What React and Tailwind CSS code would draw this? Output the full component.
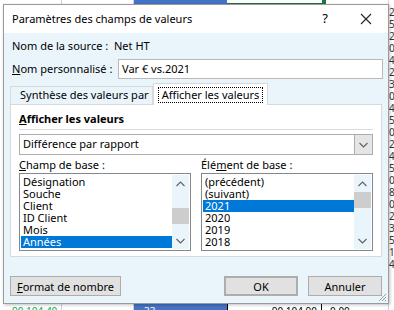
import React from 'react';

const font = "font-['Noto_Sans',sans-serif]";

const Chevron = ({ dir = 'down' }) => (
  <svg width="9" height="6" viewBox="0 0 9 6">
    {dir === 'down' ? (
      <path d="M0.5 1 L4.5 5 L8.5 1" fill="none" stroke="#606060" strokeWidth="1.1" />
    ) : (
      <path d="M0.5 5 L4.5 1 L8.5 5" fill="none" stroke="#606060" strokeWidth="1.1" />
    )}
  </svg>
);

const ListBox = ({ items, selected, thumbTop }) => (
  <div className="flex h-[78px] border border-[#828790] bg-white p-[1px]">
    <div className="flex-1 flex flex-col pt-[1px]">
      {items.map((item) => (
        <div
          key={item}
          className={`h-[12px] leading-[12px] pl-[2px] whitespace-nowrap ${
            item === selected ? 'bg-[#0078d7] text-white' : 'text-black'
          }`}
        >
          {item}
        </div>
      ))}
    </div>
    <div className="w-[17px] flex flex-col bg-[#eaf5fb]">
      <div className="h-[17px] flex items-center justify-center">
        <Chevron dir="up" />
      </div>
      <div className="flex-1 flex flex-col">
        <div style={{ height: thumbTop }} />
        <div className="h-[16px] bg-[#cdcdcd]" />
      </div>
      <div className="h-[17px] flex items-center justify-center">
        <Chevron dir="down" />
      </div>
    </div>
  </div>
);

const Button = ({ children, className = '' }) => (
  <button
    className={`h-[20px] bg-[#e1e1e1] border border-[#adadad] leading-none flex items-center justify-center whitespace-nowrap ${className}`}
  >
    {children}
  </button>
);

const App = () => {
  return (
    <div className={`relative w-[394px] h-[310px] overflow-hidden bg-white ${font} text-[11px] text-black`}>
      {/* spreadsheet behind */}
      <div className="absolute left-0 top-0 w-[394px] h-[5px] flex">
        <div className="w-[62px] border-r border-[#d4d4d4]" />
        <div className="w-[72px] border-r border-[#d4d4d4]" />
        <div className="w-[93px] bg-[#4472c4]" />
        <div className="w-[95px] border-b-2 border-[#217346]" />
        <div className="w-[4px] h-[4px] bg-[#217346]" />
      </div>
      <div className="absolute left-[389px] top-[6px] w-[5px] overflow-hidden flex flex-col text-[10px] leading-[12px] text-[#333]">
        {['2', '5', '2', '0', '4', '2', '3', '0', '4', '5', '0', '2', '4', '5', '0', '8', '0', '2', '3', '5', '1', '4'].map((n, i) => (
          <div key={i}>{n}</div>
        ))}
      </div>
      <div className="absolute left-[388px] top-0 w-[1px] h-[310px] bg-[#d4d4d4]" />
      <div className="absolute left-0 top-[303px] w-[394px] h-[7px] flex text-[10px] leading-[16px]">
        <div className="w-[62px] border-r border-[#d4d4d4] pl-[12px] text-[#00b050]">90 104,40</div>
        <div className="w-[72px] border-r border-[#d4d4d4]" />
        <div className="w-[94px] bg-[#4472c4] border-r border-black text-white pl-[10px]">33</div>
        <div className="w-[94px] border-r border-black text-right pr-[4px]">90 104,90</div>
        <div className="flex-1 pl-[8px]">0,00</div>
      </div>

      {/* dialog */}
      <div className="absolute left-[3px] top-[4px] w-[386px] h-[300px] border border-[#9a9a9a] bg-[#eaf5fb] flex flex-col shadow-[1px_1px_3px_rgba(0,0,0,0.25)]">
        <div className="h-[28px] shrink-0 bg-white flex items-center pl-[8px] pr-[16px]">
          <span className="flex-1 whitespace-nowrap">Paramètres des champs de valeurs</span>
          <span className="w-[20px] text-center mr-[25px] text-[13px]">?</span>
          <svg width="12" height="12" viewBox="0 0 12 12">
            <path d="M1 1 L11 11 M11 1 L1 11" stroke="#222" strokeWidth="1.1" />
          </svg>
        </div>

        <div className="flex-1 flex flex-col px-[6px]">
          <div className="mt-[6px] h-[14px] flex items-center pl-[2px] whitespace-nowrap">
            <span className="w-[102px]">Nom de la source :</span>
            <span>Net HT</span>
          </div>

          <div className="mt-[6px] flex items-center pl-[2px] whitespace-nowrap">
            <span className="w-[106px]">
              <span className="underline">N</span>om personnalisé :
            </span>
            <div className="flex-1 h-[20px] bg-white border border-[#b9b9b9] flex items-center pl-[3px] mr-[-1px]">
              Var € vs.2021
            </div>
          </div>

          <div className="mt-[3px] flex items-end h-[22px] whitespace-nowrap">
            <div className="w-[143px] h-[18px] border border-b-0 border-[#d9d9d9] bg-[#eaf5fb] flex items-center pl-[9px]">
              Synthèse des valeurs par
            </div>
            <div className="w-[115px] h-[22px] border border-b-0 border-[#d9d9d9] bg-white flex items-center justify-center relative z-10 -mb-[1px]">
              <span className="border border-dotted border-black px-[3px] leading-[14px]">Afficher les valeurs</span>
            </div>
          </div>

          <div className="h-[153px] bg-white border border-[#d9d9d9] px-[8px] flex flex-col">
            <div className="mt-[7px] font-bold leading-[14px]">
              <span className="underline">A</span>fficher les valeurs
            </div>
            <div className="mt-[3px] h-[1px] bg-[#dcdcdc]" />
            <div className="mt-[4px] h-[21px] border border-[#adadad] bg-white flex items-center">
              <span className="flex-1 pl-[3px]">Différence par rapport</span>
              <div className="w-[18px] h-full bg-[#e5e5e5] border-l border-[#adadad] flex items-center justify-center">
                <Chevron dir="down" />
              </div>
            </div>
            <div className="mt-[3px] flex gap-[10px]">
              <div className="w-[172px] flex flex-col">
                <div className="h-[14px] leading-[14px] mb-[1px]">
                  <span className="underline">C</span>hamp de base :
                </div>
                <ListBox
                  items={['Désignation', 'Souche', 'Client', 'ID Client', 'Mois', 'Années']}
                  selected="Années"
                  thumbTop={16}
                />
              </div>
              <div className="flex-1 flex flex-col">
                <div className="h-[14px] leading-[14px] mb-[1px]">
                  Élé<span className="underline">m</span>ent de base :
                </div>
                <ListBox
                  items={['(précédent)', '(suivant)', '2021', '2020', '2019', '2018']}
                  selected="2021"
                  thumbTop={0}
                />
              </div>
            </div>
          </div>

          <div className="mt-[19px] flex">
            <Button className="w-[111px]">
              <span className="underline">F</span>ormat de nombre
            </Button>
            <div className="flex-1" />
            <Button className="w-[74px] border-2 border-[#0078d7]">OK</Button>
            <Button className="w-[74px] ml-[10px]">Annuler</Button>
          </div>
        </div>
        <svg width="10" height="10" viewBox="0 0 10 10" className="absolute right-[1px] bottom-[1px]">
          <path d="M9 2 L2 9 M9 5 L5 9 M9 8 L8 9" stroke="#a0a0a0" strokeWidth="1" />
        </svg>
      </div>
    </div>
  );
};

export default App;
